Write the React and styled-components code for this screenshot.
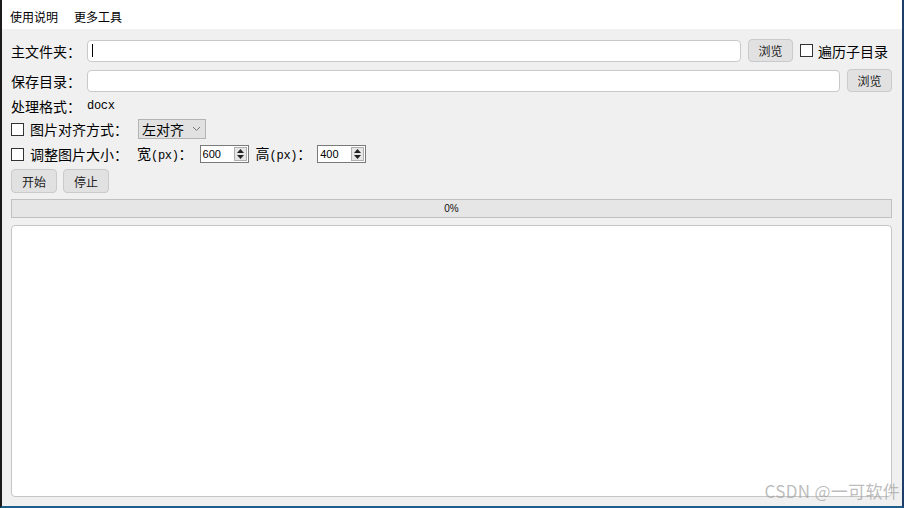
import React from "react";
import styled, { createGlobalStyle } from "styled-components";

const GlobalStyle = createGlobalStyle`
  html, body {
    margin: 0;
    padding: 0;
    background: #f0f0f0;
  }
  * {
    box-sizing: border-box;
  }
`;

const CJK = `"Noto Sans CJK SC", "Liberation Sans", sans-serif`;

const Frame = styled.div`
  position: relative;
  width: 904px;
  height: 508px;
  display: flex;
  flex-direction: column;
  background: #f0f0f0;
  border-left: 2px solid #1b1b1b;
  border-right: 2px solid #1d3e6b;
  border-bottom: 2px solid #1f5f8c;
  font-family: ${CJK};
  color: #000;
  overflow: hidden;
`;

const MenuBar = styled.div`
  height: 29px;
  background: #ffffff;
  display: flex;
  align-items: center;
  gap: 16px;
  padding: 4px 0 0 8px;
  font-size: 12px;
`;

const MenuItem = styled.span`
  line-height: 1;
`;

const Body = styled.div`
  flex: 1;
  display: flex;
  flex-direction: column;
  padding: 10px 10px 9px 9px;
`;

const Row = styled.div`
  display: flex;
  align-items: center;
  height: ${(p) => p.h || 20}px;
  margin-top: ${(p) => p.mt || 0}px;
  gap: ${(p) => p.gap ?? 0}px;
  font-size: 14px;
`;

const Label = styled.span`
  width: ${(p) => (p.w ? `${p.w}px` : "auto")};
  flex-shrink: 0;
  white-space: nowrap;
  line-height: 1;
`;

const Mono = styled.span`
  font-family: "Liberation Mono", "DejaVu Sans Mono", monospace;
  font-size: 12px;
  letter-spacing: -0.3px;
  margin-left: ${(p) => p.ml || 0}px;
`;

const TextInput = styled.div`
  flex: 1;
  height: 22px;
  background: #ffffff;
  border: 1px solid #c9c9c9;
  border-radius: 4px;
  display: flex;
  align-items: center;
  padding-left: 4px;
`;

const Caret = styled.span`
  width: 1px;
  height: 13px;
  background: #000;
`;

const Button = styled.div`
  flex-shrink: 0;
  width: ${(p) => p.w || 45}px;
  height: ${(p) => p.h || 23}px;
  margin-left: ${(p) => p.ml || 0}px;
  background: #e1e1e1;
  border: 1px solid #cacaca;
  border-radius: 4px;
  display: flex;
  align-items: center;
  justify-content: center;
  font-size: 12px;
  color: #222;
`;

const Check = styled.span`
  flex-shrink: 0;
  width: 13px;
  height: 13px;
  border: 1px solid #333;
  background: #fff;
  margin-left: ${(p) => p.ml || 0}px;
  margin-right: ${(p) => p.mr || 6}px;
`;

const Combo = styled.div`
  width: 68px;
  height: 20px;
  margin-left: ${(p) => p.ml || 0}px;
  background: #e1e1e1;
  border: 1px solid #b4b4b4;
  display: flex;
  align-items: center;
  padding: 0 4px 0 3px;
  justify-content: space-between;
  font-size: 14px;
`;

const Spin = styled.div`
  width: 49px;
  height: 18px;
  margin-left: ${(p) => p.ml || 0}px;
  margin-right: ${(p) => p.mr || 0}px;
  background: #fff;
  border: 1px solid #7a7a7a;
  display: flex;
  align-items: stretch;
`;

const SpinValue = styled.span`
  flex: 1;
  font-family: "Liberation Sans", sans-serif;
  font-size: 11px;
  line-height: 16px;
  padding-left: 2px;
`;

const SpinButtons = styled.div`
  width: 13px;
  margin: 1px;
  background: #e6e6e6;
  border: 1px solid #b0b0b0;
  display: flex;
  flex-direction: column;
  align-items: center;
  justify-content: center;
  gap: 2px;
`;

const Progress = styled.div`
  height: 19px;
  margin-top: 6px;
  background: #e6e6e6;
  border: 1px solid #c0c0c0;
  display: flex;
  align-items: center;
  justify-content: center;
  font-family: "Liberation Sans", sans-serif;
  font-size: 10px;
  color: #111;
`;

const LogArea = styled.div`
  flex: 1;
  margin-top: 7px;
  background: #ffffff;
  border: 1px solid #c6c6c6;
  border-radius: 4px;
`;

const Watermark = styled.span`
  position: absolute;
  right: 2px;
  bottom: 3px;
  font-family: ${CJK};
  font-size: 17px;
  color: rgba(160, 160, 160, 0.7);
  letter-spacing: 0.3px;
`;

const Arrow = ({ up }) => (
  <svg width="7" height="4" viewBox="0 0 7 4">
    <path d={up ? "M0 4 L3.5 0 L7 4 Z" : "M0 0 L3.5 4 L7 0 Z"} fill="#222" />
  </svg>
);

const Chevron = () => (
  <svg width="9" height="6" viewBox="0 0 9 6">
    <path d="M1 1 L4.5 4.5 L8 1" fill="none" stroke="#777" strokeWidth="1" />
  </svg>
);

const SpinBox = ({ value, ml, mr }) => (
  <Spin ml={ml} mr={mr}>
    <SpinValue>{value}</SpinValue>
    <SpinButtons>
      <Arrow up />
      <Arrow />
    </SpinButtons>
  </Spin>
);

export default function App() {
  return (
    <>
      <GlobalStyle />
      <Frame>
        <MenuBar>
          <MenuItem>使用说明</MenuItem>
          <MenuItem>更多工具</MenuItem>
        </MenuBar>
        <Body>
          <Row h={23}>
            <Label w={76}>主文件夹：</Label>
            <TextInput>
              <Caret />
            </TextInput>
            <Button ml={7}>浏览</Button>
            <Check ml={7} mr={5} />
            <Label>遍历子目录</Label>
            <span style={{ width: 4 }} />
          </Row>
          <Row h={23} mt={7}>
            <Label w={76}>保存目录：</Label>
            <TextInput />
            <Button ml={7}>浏览</Button>
          </Row>
          <Row h={18} mt={5}>
            <Label>处理格式：</Label>
            <Mono ml={6}>docx</Mono>
          </Row>
          <Row h={20} mt={4}>
            <Check />
            <Label w={108}>图片对齐方式：</Label>
            <Combo>
              <span>左对齐</span>
              <Chevron />
            </Combo>
          </Row>
          <Row h={18} mt={6}>
            <Check />
            <Label w={107}>调整图片大小：</Label>
            <Label>
              宽<Mono>(px)</Mono>：
            </Label>
            <SpinBox value="600" ml={7} mr={7} />
            <Label>
              高<Mono>(px)</Mono>：
            </Label>
            <SpinBox value="400" ml={6} />
          </Row>
          <Row h={24} mt={6} gap={6}>
            <Button w={46} h={24}>开始</Button>
            <Button w={46} h={24}>停止</Button>
          </Row>
          <Progress>0%</Progress>
          <LogArea />
        </Body>
        <Watermark>CSDN @一可软件</Watermark>
      </Frame>
    </>
  );
}
